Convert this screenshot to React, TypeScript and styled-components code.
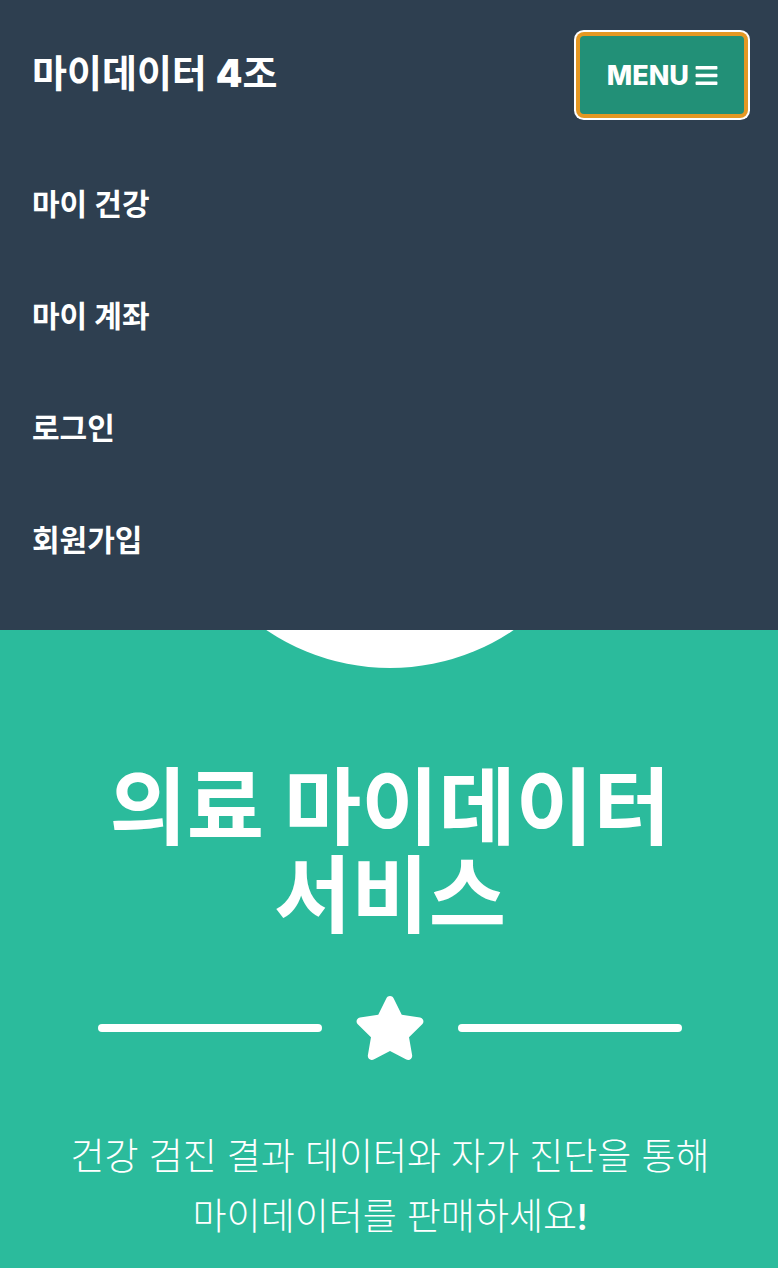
import React from 'react';
import styled, { createGlobalStyle } from 'styled-components';
import { FaBars, FaStar } from 'react-icons/fa';

const displayFont = `Inter, 'Noto Sans CJK KR', sans-serif`;
const bodyFont = `Lato, 'Noto Sans CJK KR', sans-serif`;

const GlobalStyle = createGlobalStyle`
  *, *::before, *::after { box-sizing: border-box; }
  body {
    margin: 0;
    background: #2bbb9c;
    color: #fff;
    font-family: ${displayFont};
    word-break: keep-all;
  }
`;

const Navbar = styled.header`
  position: absolute;
  inset: 0 0 auto;
  z-index: 1;
  padding: 36px 34px 34px 32px;
  background: #2e3f50;
`;

const NavTop = styled.div`
  display: flex;
  align-items: center;
  justify-content: space-between;
  margin-bottom: 34px;
`;

const Brand = styled.a`
  padding-bottom: 4px;
  color: inherit;
  font-size: 38px;
  line-height: 60px;
  font-weight: 700;
  text-decoration: none;
`;

const Digit = styled.span`
  font-weight: 900;
`;

const MenuButton = styled.button`
  display: flex;
  align-items: center;
  gap: 5px;
  height: 78px;
  padding: 0 25px 0 27px;
  border: 0;
  border-radius: 4px;
  background: #229077;
  box-shadow: 0 0 0 4px #e59823, 0 0 0 6px #fff;
  color: #fff;
  font-family: ${displayFont};
  font-size: 27px;
  font-weight: 800;
`;

const NavList = styled.ul`
  margin: 0;
  padding: 0;
  list-style: none;
`;

const NavLink = styled.a`
  display: block;
  padding: 32px 0;
  color: inherit;
  font-size: 30px;
  font-weight: 700;
  line-height: 48px;
  text-decoration: none;
`;

const Masthead = styled.main`
  display: flex;
  flex-direction: column;
  align-items: center;
  padding: 228px 46px 24px 48px;
  text-align: center;
`;

const Avatar = styled.div`
  width: 440px;
  height: 440px;
  margin-bottom: 96px;
  border-radius: 50%;
  background: #fff;
`;

const Title = styled.h1`
  max-width: 680px;
  margin: 0 0 40px;
  font-size: 84px;
  font-weight: 700;
  line-height: 88px;
`;

const Divider = styled.div`
  display: flex;
  align-items: center;
  gap: 32px;
  height: 96px;
  margin-bottom: 50px;
`;

const DividerLine = styled.span`
  width: 224px;
  height: 8px;
  border-radius: 8px;
  background: #fff;
`;

const StarIcon = styled(FaStar)`
  width: 72px;
  height: 64px;
`;

const Subtitle = styled.p`
  max-width: 680px;
  margin: 0;
  font-family: ${bodyFont};
  font-size: 37px;
  font-weight: 300;
  line-height: 60px;
`;

const Mark = styled.span`
  font-weight: 700;
`;

const links = ['마이 건강', '마이 계좌', '로그인', '회원가입'];

export default function App() {
  return (
    <>
      <GlobalStyle />
      <Navbar>
        <NavTop>
          <Brand href="#top">마이데이터 <Digit>4</Digit>조</Brand>
          <MenuButton type="button" aria-expanded="true" aria-controls="nav-list">
            MENU <FaBars size={25} aria-hidden="true" />
          </MenuButton>
        </NavTop>
        <nav>
          <NavList id="nav-list">
            {links.map((label) => (
              <li key={label}>
                <NavLink href="#">{label}</NavLink>
              </li>
            ))}
          </NavList>
        </nav>
      </Navbar>
      <Masthead id="top">
        <Avatar />
        <Title>의료 마이데이터 서비스</Title>
        <Divider>
          <DividerLine />
          <StarIcon viewBox="0 0 576 512" aria-hidden="true" />
          <DividerLine />
        </Divider>
        <Subtitle>
          건강 검진 결과 데이터와 자가 진단을 통해 마이데이터를 판매하세요<Mark>!</Mark>
        </Subtitle>
      </Masthead>
    </>
  );
}
